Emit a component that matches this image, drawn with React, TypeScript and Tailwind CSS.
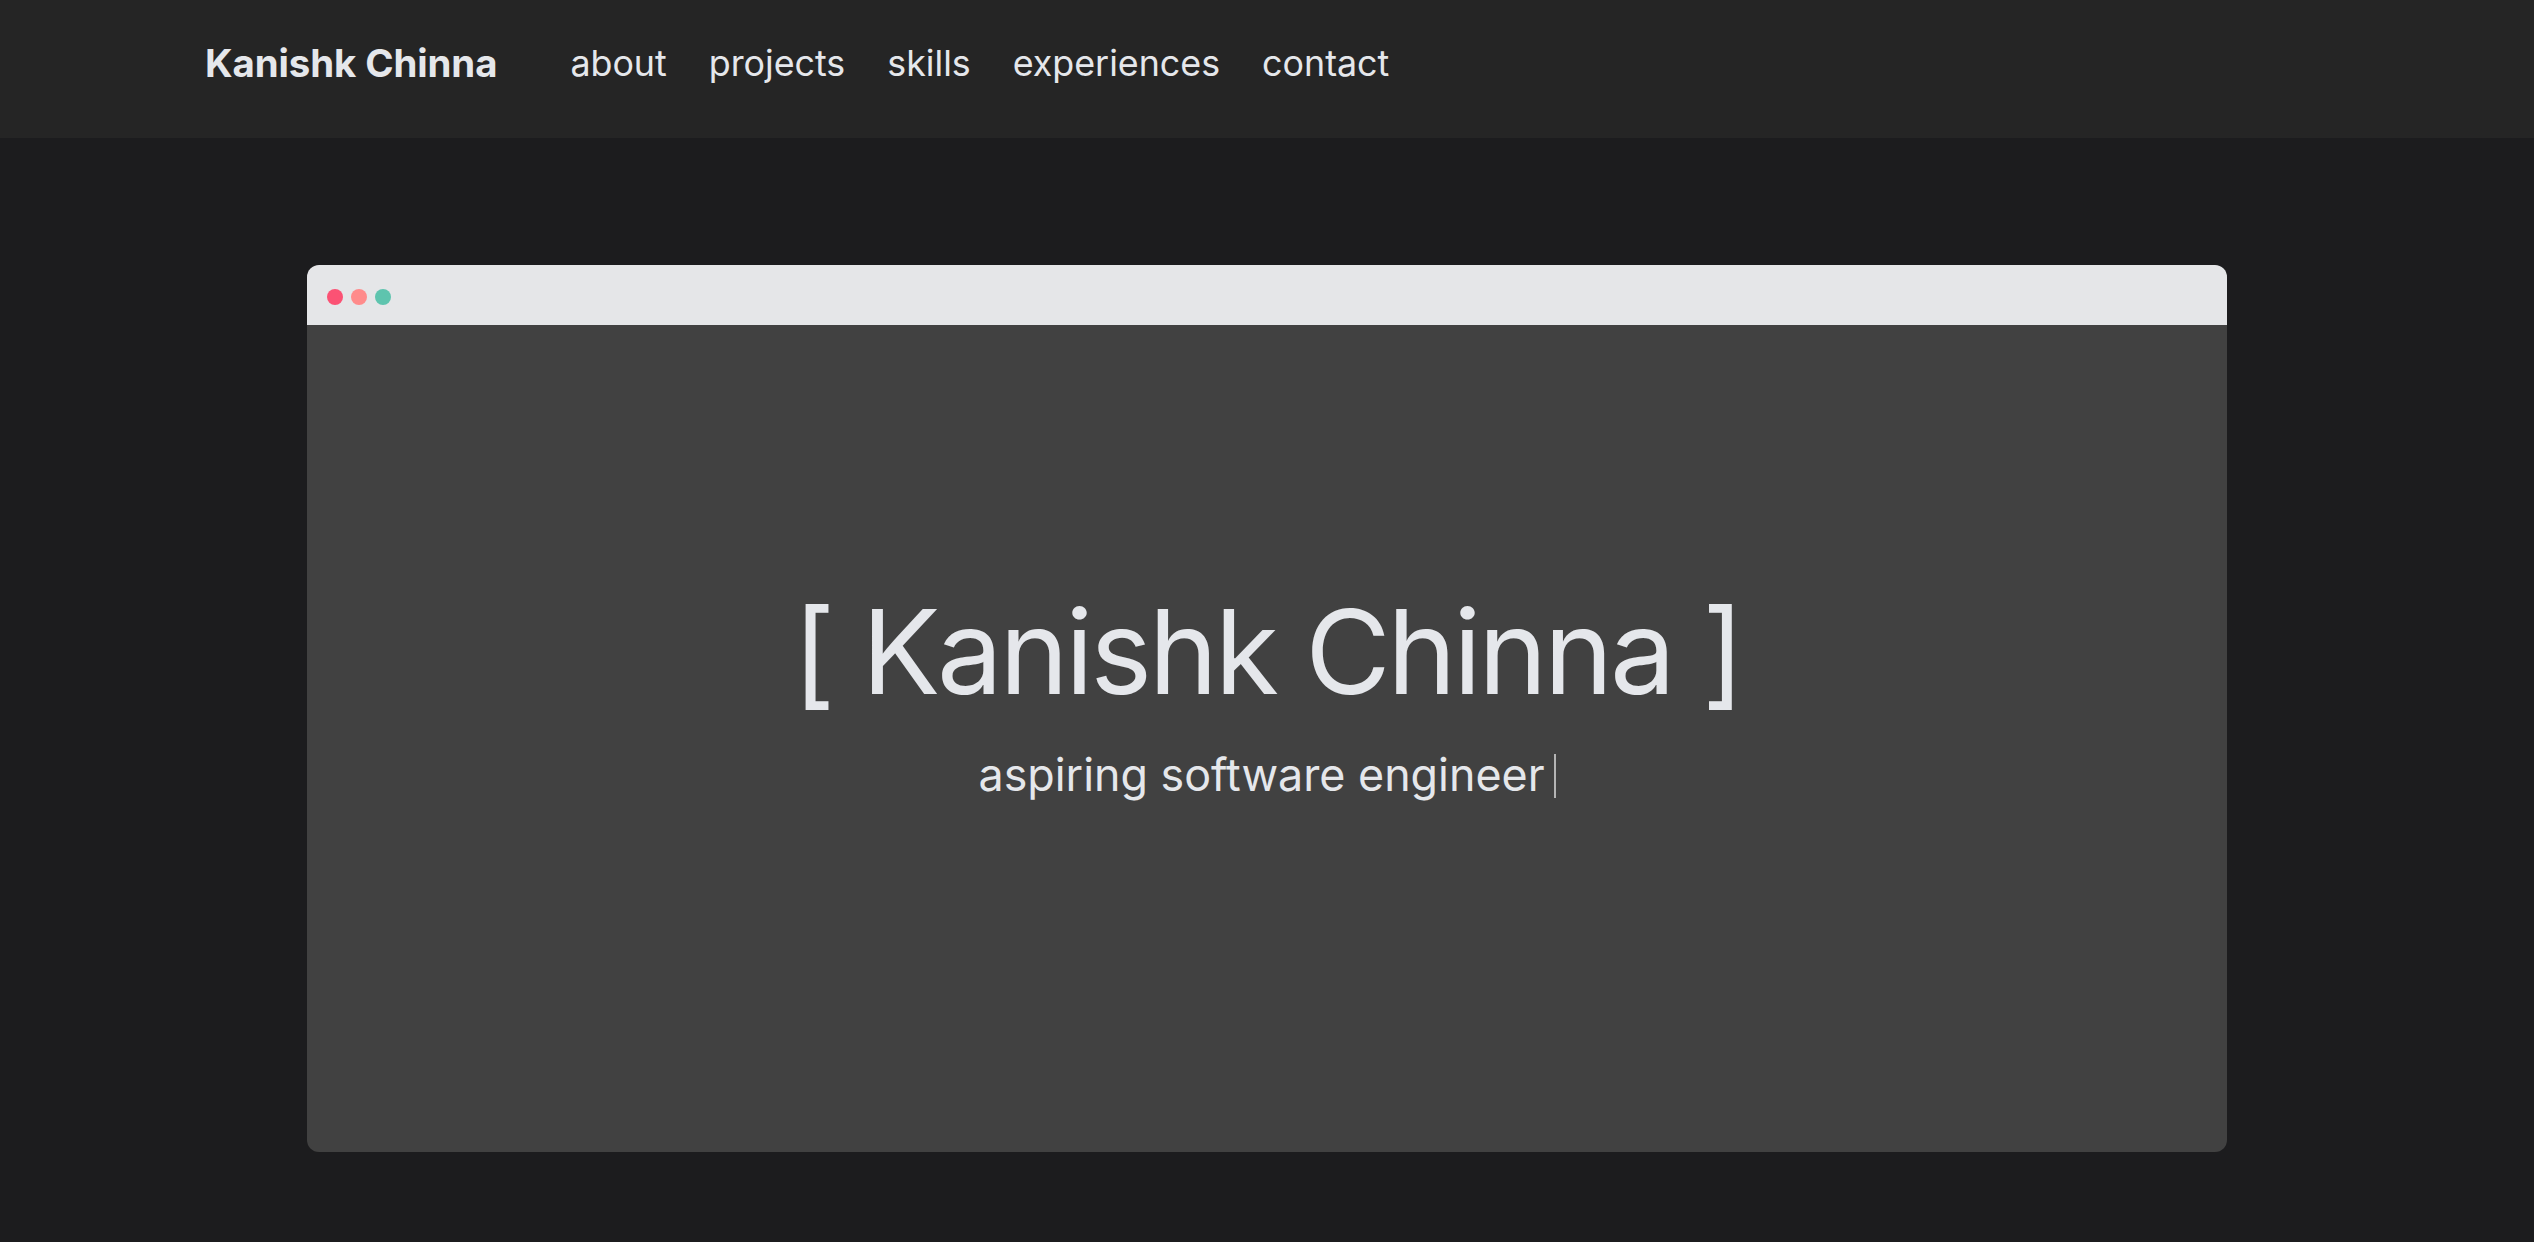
import React from "react";

const links = ["about", "projects", "skills", "experiences", "contact"];

function Navbar() {
  return (
    <nav className="h-[138px] bg-[#252525] flex items-center pl-[205px] pb-[10px]">
      <a className="text-[38.4px] font-bold text-[#e5e7eb] tracking-[-0.1px] mr-[73px]">
        Kanishk Chinna
      </a>
      <ul className="flex items-center gap-[42px]">
        {links.map((l) => (
          <li key={l} className="text-[35.8px] text-[#e5e7eb]">
            {l}
          </li>
        ))}
      </ul>
    </nav>
  );
}

function TerminalWindow() {
  return (
    <div className="w-[1920px] h-[887px] rounded-[12px] overflow-hidden flex flex-col">
      {/* title bar */}
      <div className="h-[60px] bg-[#e5e6e8] flex items-center gap-[8px] pl-[20px] pt-[3px]">
        <span className="w-[16px] h-[16px] rounded-full bg-[#fb5274]" />
        <span className="w-[16px] h-[16px] rounded-full bg-[#ff8b8b]" />
        <span className="w-[16px] h-[16px] rounded-full bg-[#5ec4ae]" />
      </div>

      {/* body */}
      <div className="flex-1 bg-[#414141] flex flex-col items-center pt-[268px]">
        <h1 className="text-[117px] leading-none text-[#e5e7eb] tracking-[-3.3px]">
          [ Kanishk Chinna ]
        </h1>
        <p className="mt-[32px] text-[44.8px] leading-[1.5] text-[#e5e7eb] flex items-center">
          aspiring software engineer
          <span className="ml-[9px] inline-block w-[2px] h-[44px] bg-[#b4b4b4]" />
        </p>
      </div>
    </div>
  );
}

export default function App() {
  return (
    <div
      className="min-h-screen bg-[#1c1c1e]"
      style={{ fontFamily: "Inter, 'Noto Sans', sans-serif" }}
    >
      <Navbar />
      <main className="flex justify-center pt-[127px] pb-[90px]">
        <TerminalWindow />
      </main>
    </div>
  );
}
